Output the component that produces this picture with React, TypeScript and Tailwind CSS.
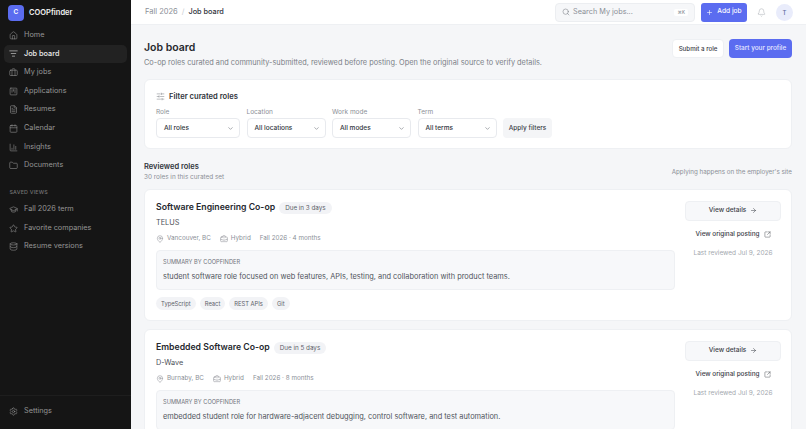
import {
  ArrowRight,
  Bell,
  Briefcase,
  BriefcaseBusiness,
  Calendar,
  ChartColumn,
  ChevronDown,
  Database,
  FileText,
  Folder,
  GraduationCap,
  House,
  ListFilter,
  MapPin,
  Plus,
  Search,
  Settings,
  SlidersHorizontal,
  SquareArrowOutUpRight,
  SquareKanban,
  Star,
} from 'lucide-react';

const mainNav = [
  { label: 'Home', icon: House },
  { label: 'Job board', icon: ListFilter, active: true },
  { label: 'My jobs', icon: Briefcase },
  { label: 'Applications', icon: SquareKanban },
  { label: 'Resumes', icon: FileText },
  { label: 'Calendar', icon: Calendar },
  { label: 'Insights', icon: ChartColumn },
  { label: 'Documents', icon: Folder },
];

const savedViews = [
  { label: 'Fall 2026 term', icon: GraduationCap },
  { label: 'Favorite companies', icon: Star },
  { label: 'Resume versions', icon: Database },
];

const filters = [
  { label: 'Role', value: 'All roles', width: 'w-[84px]' },
  { label: 'Location', value: 'All locations', width: 'w-[79px]' },
  { label: 'Work mode', value: 'All modes', width: 'w-[79px]' },
  { label: 'Term', value: 'All terms', width: 'w-[79px]' },
];

const roles = [
  {
    title: 'Software Engineering Co-op',
    due: 'Due in 3 days',
    company: 'TELUS',
    location: 'Vancouver, BC',
    term: 'Fall 2026 · 4 months',
    summary: 'student software role focused on web features, APIs, testing, and collaboration with product teams.',
    tags: ['TypeScript', 'React', 'REST APIs', 'Git'],
  },
  {
    title: 'Embedded Software Co-op',
    due: 'Due in 5 days',
    company: 'D-Wave',
    location: 'Burnaby, BC',
    term: 'Fall 2026 · 8 months',
    summary: 'embedded student role for hardware-adjacent debugging, control software, and test automation.',
    tags: [],
  },
];

function NavItem({ label, icon: Icon, active }: { label: string; icon: typeof House; active?: boolean }) {
  return (
    <div
      className={`flex h-[18.67px] items-center gap-[6px] rounded-[5px] px-[5px] text-[7.3px] ${
        active ? 'bg-[#222222] font-medium text-[#ececec]' : 'text-[#969696]'
      }`}
    >
      <Icon size={9} strokeWidth={1.5} className="shrink-0" />
      <span>{label}</span>
    </div>
  );
}

function Sidebar() {
  return (
    <aside className="flex w-[131px] shrink-0 flex-col bg-[#151515]">
      <div className="flex h-[26px] items-center gap-[5px] pb-[1px] pl-[8px]">
        <div className="flex h-[16px] w-[16px] items-center justify-center rounded-[4px] bg-[#5b6cf0] text-[6.5px] font-semibold text-white">
          C
        </div>
        <span className="text-[7.5px] font-semibold text-[#f0f0f0]">COOPfinder</span>
      </div>
      <nav className="flex flex-col px-[4px]">
        {mainNav.map((item) => (
          <NavItem key={item.label} {...item} />
        ))}
      </nav>
      <div className="mb-[3px] mt-[14px] pl-[9.5px] text-[5.3px] font-medium tracking-[0.04em] text-[#737373]">SAVED VIEWS</div>
      <nav className="flex flex-col px-[4px]">
        {savedViews.map((item) => (
          <NavItem key={item.label} {...item} />
        ))}
      </nav>
      <div className="mt-auto flex h-[34px] flex-col justify-center border-t border-[#1e1e1e] px-[4px] pb-[2px]">
        <NavItem label="Settings" icon={Settings} />
      </div>
    </aside>
  );
}

function Topbar() {
  return (
    <header className="flex h-[25px] shrink-0 items-center justify-between border-b border-[#eef0f3] bg-white pl-[14px] pr-[13px]">
      <div className="flex items-center gap-[4px] text-[7.5px]">
        <span className="text-[#8b8f97]">Fall 2026</span>
        <span className="text-[#c9ccd2]">/</span>
        <span className="text-[7.3px] font-medium text-[#30343b]">Job board</span>
      </div>
      <div className="flex items-center">
        <div className="flex h-[19px] w-[140px] items-center rounded-[4px] border border-[#eceef1] bg-[#f6f7f9] px-[6px] text-[7.3px] text-[#8b8f97]">
          <Search size={8} strokeWidth={1.5} className="mr-[3px] text-[#70747c]" />
          <span>Search My jobs...</span>
          <span className="ml-auto rounded-[2px] bg-white px-[3px] text-[4.5px] leading-[7px] text-[#70747c]">⌘K</span>
        </div>
        <div className="ml-[6px] flex h-[19px] w-[46px] items-center justify-center gap-[4px] rounded-[3px] bg-[#5b6cf0] text-[6.6px] font-medium text-white">
          <Plus size={7} strokeWidth={2} />
          Add job
        </div>
        <Bell size={9} strokeWidth={1.25} className="ml-[10px] text-[#a3a7ae]" />
        <div className="ml-[10px] flex h-[17px] w-[17px] items-center justify-center rounded-full bg-[#e9ecfb] text-[6px] font-medium text-[#5f6b9c]">
          T
        </div>
      </div>
    </header>
  );
}

function FilterCard() {
  return (
    <section className="mt-[9px] h-[70px] shrink-0 rounded-[6px] border border-[#eef0f3] bg-white pl-[11px] pt-[11px]">
      <div className="flex items-center gap-[4px] text-[7.6px] font-semibold text-[#30343b]">
        <SlidersHorizontal size={9} strokeWidth={1.25} className="text-[#6f737b]" />
        Filter curated roles
      </div>
      <div className="mt-[5.5px] flex items-end">
        {filters.map((f) => (
          <div key={f.label} className="mr-[6.5px]">
            <div className="mb-[1.5px] text-[6.5px] leading-[9px] text-[#8b8f97]">{f.label}</div>
            <div className={`flex h-[20px] ${f.width} items-center justify-between rounded-[4px] border border-[#e8eaee] pl-[7px] pr-[5px] text-[6.5px] font-medium text-[#30343b]`}>
              {f.value}
              <ChevronDown size={7} className="text-[#6f737b]" />
            </div>
          </div>
        ))}
        <div className="flex h-[20px] w-[49px] items-center justify-center rounded-[4px] bg-[#f4f5f7] text-[6.5px] font-medium text-[#3c4047]">
          Apply filters
        </div>
      </div>
    </section>
  );
}

function RoleCard({ role }: { role: (typeof roles)[number] }) {
  return (
    <article className="flex h-[132px] shrink-0 rounded-[6px] border border-[#eef0f3] bg-white pl-[11px] pr-[10px] pt-[10.5px]">
      <div className="min-w-0 flex-1">
        <div className="flex h-[14px] items-center gap-[4px]">
          <h3 className="text-[8.7px] font-semibold text-[#25282e]">{role.title}</h3>
          <span className="rounded-full bg-[#f2f3f6] px-[6px] text-[6.3px] leading-[12px] text-[#5d6169]">{role.due}</span>
        </div>
        <div className="mt-[1px] text-[7.3px] leading-[14px] text-[#4c5058]">{role.company}</div>
        <div className="mt-[3px] flex h-[12px] items-center text-[6.3px] text-[#8b8f97]">
          <MapPin size={8} strokeWidth={1.25} className="mr-[3px] text-[#6f737b]" />
          {role.location}
          <BriefcaseBusiness size={8} strokeWidth={1.25} className="ml-[9px] mr-[3px] text-[#6f737b]" />
          Hybrid
          <span className="ml-[9px]">{role.term}</span>
        </div>
        <div className="mt-[5.5px] h-[40px] rounded-[4px] border border-[#eef0f3] bg-[#f7f8fa] pl-[6px] pt-[5.5px]">
          <div className="text-[5.7px] leading-[9px] text-[#70747c]">SUMMARY BY COOPFINDER</div>
          <div className="mt-[5.5px] text-[7.4px] leading-[11px] text-[#50545c]">{role.summary}</div>
        </div>
        <div className="mt-[7px] flex gap-[4px]">
          {role.tags.map((tag) => (
            <span key={tag} className="rounded-full bg-[#f2f3f6] px-[5px] text-[5.8px] leading-[13px] text-[#5d6169]">
              {tag}
            </span>
          ))}
        </div>
      </div>
      <div className="ml-[10px] flex w-[96px] shrink-0 flex-col items-center">
        <div className="flex h-[20px] w-full items-center justify-center gap-[4px] rounded-[4px] border border-[#eef0f3] bg-[#f7f8fa] text-[6.5px] font-medium text-[#3c4047]">
          View details
          <ArrowRight size={7} strokeWidth={1.75} />
        </div>
        <div className="mt-[8px] flex h-[12px] items-center gap-[4px] text-[6.4px] font-medium text-[#3c4047]">
          View original posting
          <SquareArrowOutUpRight size={7} strokeWidth={1.5} />
        </div>
        <div className="mt-[6.5px] text-[6.5px] leading-[12px] text-[#a3a7ae]">Last reviewed Jul 9, 2026</div>
      </div>
    </article>
  );
}

export default function App() {
  return (
    <div className="flex h-screen overflow-hidden bg-[#f5f6f8] font-['Inter',sans-serif]">
      <Sidebar />
      <div className="flex min-w-0 flex-1 flex-col">
        <Topbar />
        <main className="flex flex-col overflow-hidden pl-[13px] pr-[14px]">
          <div className="mt-[14px] flex shrink-0 items-start justify-between">
            <div className="pt-[1px]">
              <h1 className="text-[10.5px] font-semibold leading-[16px] text-[#25282e]">Job board</h1>
              <p className="text-[7.35px] leading-[14px] text-[#7b7f87]">
                Co-op roles curated and community-submitted, reviewed before posting. Open the original source to verify details.
              </p>
            </div>
            <div className="flex gap-[5px]">
              <div className="flex h-[19px] w-[52px] items-center justify-center rounded-[4px] border border-[#eef0f3] bg-white text-[6.2px] font-medium text-[#3c4047]">
                Submit a role
              </div>
              <div className="flex h-[19px] w-[63px] items-center justify-center rounded-[4px] bg-[#5b6cf0] text-[6.4px] font-medium text-[#e6e9ff]">
                Start your profile
              </div>
            </div>
          </div>
          <FilterCard />
          <div className="mt-[12px] flex shrink-0 items-center justify-between pb-[6px]">
            <div>
              <div className="text-[7.5px] font-semibold leading-[11px] text-[#30343b]">Reviewed roles</div>
              <div className="text-[6.4px] leading-[11px] text-[#8b8f97]">30 roles in this curated set</div>
            </div>
            <div className="text-[6.25px] leading-[11px] text-[#8b8f97]">Applying happens on the employer's site</div>
          </div>
          <div className="flex flex-col gap-[8px]">
            {roles.map((role) => (
              <RoleCard key={role.title} role={role} />
            ))}
          </div>
        </main>
      </div>
    </div>
  );
}
